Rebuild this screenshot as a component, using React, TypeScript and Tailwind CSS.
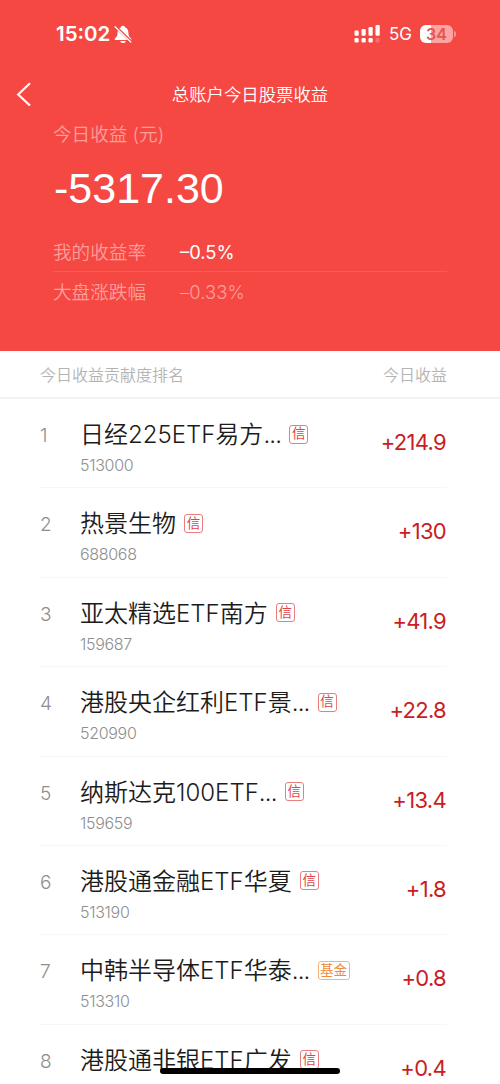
import { clsx } from "clsx";

type Holding = {
  name: string;
  cut?: boolean;
  code?: string;
  tag: "信" | "基金";
  profit: string;
};

const holdings: Holding[] = [
  { name: "日经225ETF易方", cut: true, code: "513000", tag: "信", profit: "+214.9" },
  { name: "热景生物", code: "688068", tag: "信", profit: "+130" },
  { name: "亚太精选ETF南方", code: "159687", tag: "信", profit: "+41.9" },
  { name: "港股央企红利ETF景", cut: true, code: "520990", tag: "信", profit: "+22.8" },
  { name: "纳斯达克100ETF", cut: true, code: "159659", tag: "信", profit: "+13.4" },
  { name: "港股通金融ETF华夏", code: "513190", tag: "信", profit: "+1.8" },
  { name: "中韩半导体ETF华泰", cut: true, code: "513310", tag: "基金", profit: "+0.8" },
  { name: "港股通非银ETF广发", tag: "信", profit: "+0.4" },
];

function BellOff() {
  return (
    <svg className="ml-[4px] h-[19px] w-[18px]" viewBox="0 0 18 19" fill="none">
      <path
        d="M9 .8c-1.300 0-2 .8-2.200 1.700C4.600 3.300 3.600 5.300 3.600 7.800c0 3.200-1.200 4.200-2.700 5.700-.6.7-.3 1.500.6 1.500h15c.9 0 1.200-.8.6-1.500-1.500-1.500-2.700-2.500-2.700-5.700 0-2.500-1-4.500-3.200-5.300C11 1.600 10.300.8 9 .8z"
        fill="#fff"
      />
      <path d="M6.200 15.900h5.600c-.3 1.400-1.400 2.100-2.800 2.100s-2.500-.7-2.800-2.100z" fill="#fff" />
      <path d="M1.200 1.300 17 16.500" stroke="#f64843" strokeWidth="2.800" />
      <path d="M1 1.700 16.800 17" stroke="#fff" strokeWidth="1.200" strokeLinecap="round" />
    </svg>
  );
}

function Signal() {
  return (
    <svg className="h-[18px] w-[26px]" viewBox="0 0 26 18" fill="#fff">
      <rect x="0.500" y="5.500" width="4.200" height="5.200" rx="1.300" />
      <rect x="7.500" y="4" width="4.200" height="6.700" rx="1.300" />
      <rect x="14.500" y="2" width="4.200" height="8.700" rx="1.300" />
      <rect x="21.500" y="0" width="4.200" height="10.700" rx="1.300" />
      <rect x="0.500" y="13" width="4.200" height="4.600" rx="1.300" />
      <rect x="7.500" y="13" width="4.200" height="4.600" rx="1.300" />
      <rect x="14.500" y="13" width="4.200" height="4.600" rx="1.300" />
      <rect x="21.500" y="13" width="4.200" height="4.600" rx="1.300" opacity="0.2" />
    </svg>
  );
}

function Battery() {
  return (
    <div className="flex items-center">
      <div className="flex h-[18px] w-[33px] items-center justify-center rounded-[6px] bg-linear-to-r from-white from-34% to-[#fda4a2] to-34% text-[16px] leading-none font-semibold text-[#e25553]">
        34
      </div>
      <div className="ml-px h-[6px] w-[2px] rounded-r-full bg-[#fb908d]" />
    </div>
  );
}

function StatusBar() {
  return (
    <div className="flex h-[68px] items-center justify-between pr-[44px] pl-[56px] text-white">
      <div className="flex items-center">
        <span className="pt-px text-[20.500px] font-semibold">15:02</span>
        <BellOff />
      </div>
      <div className="flex items-center">
        <Signal />
        <span className="ml-[9px] w-[31px] pt-[2px] text-[17px] tracking-[-0.2px]">5G</span>
        <Battery />
      </div>
    </div>
  );
}

function HoldingRow({ item, rank }: { item: Holding; rank: number }) {
  return (
    <li className="flex h-[89.4px] border-b border-[#f7f7f7]">
      <span className="w-10 pt-[22px] text-[19px] leading-[30px] font-[350] text-[#8e8e8e]">{rank}</span>
      <div className="flex-1 pt-[18px]">
        <div className="flex h-[36px] items-center">
          <span className="text-[24px] leading-[36px] font-[350] whitespace-nowrap text-[#1c1c1c]">
            {item.name}
            {item.cut && <span className="tracking-[-0.8px]">...</span>}
          </span>
          <span
            className={clsx(
              "mb-[2px] ml-[8px] flex h-[19px] items-center justify-center rounded-[3px] border text-[13.500px] leading-none",
              item.tag === "信"
                ? "w-[19px] border-[#ea7d80] text-[#dc4448]"
                : "w-[32px] border-[#f6b27b] text-[#ee8b3c]",
            )}
          >
            {item.tag}
          </span>
        </div>
        {item.code && (
          <p className="text-[16px] leading-[24px] font-[350] tracking-[-0.3px] text-[#8e8e8e]">{item.code}</p>
        )}
      </div>
      <span className="pt-[28px] pr-px text-[22px] leading-[30px] font-[370] tracking-[-0.7px] text-[#c91d23]">
        {item.profit}
      </span>
    </li>
  );
}

export default function App() {
  return (
    <div className="relative h-[1084px] w-[500px] overflow-hidden bg-white font-['Inter','Noto_Sans_CJK_SC',sans-serif]">
      <header className="h-[351px] bg-[#f64843]">
        <StatusBar />
        <div className="grid h-[52px] grid-cols-[60px_1fr_60px] items-center text-white">
          <svg className="ml-[16px] h-6 w-4" viewBox="0 0 16 24" fill="none" stroke="#fff" strokeWidth="2.200">
            <path d="M14 1.200 2.200 12.500l11.800 11" />
          </svg>
          <h1 className="pt-[3px] text-center text-[17.400px] font-[350]">总账户今日股票收益</h1>
        </div>
        <div className="pr-[53px] pl-[53px]">
          <p className="h-[28px] text-[18.600px] leading-[29px] font-[350] text-[#fb9f9b]">
            今日收益 (元)
          </p>
          <p className="h-[84px] pt-[10px] pl-px font-['Liberation_Sans',sans-serif] text-[43px] leading-[60px] text-white">
            -5317.30
          </p>
          <div className="flex h-10 items-center border-b border-[#f95c58] pt-[2px] text-[18.600px]">
            <span className="w-[127px] font-[350] text-[#fb9f9b]">我的收益率</span>
            <span className="text-[18.400px] font-[370] text-white">–0.5%</span>
          </div>
          <div className="flex h-10 items-center pt-[2px] text-[18.600px] font-[350] text-[#fb9f9b]">
            <span className="w-[127px]">大盘涨跌幅</span>
            <span className="text-[18.400px] tracking-[0.1px]">–0.33%</span>
          </div>
        </div>
      </header>

      <div className="flex h-[48px] items-center justify-between border-b-2 border-[#f2f2f2] pt-[2px] pr-[53px] pl-10 text-[16px] font-[350] text-[#b4b4b4]">
        <span>今日收益贡献度排名</span>
        <span>今日收益</span>
      </div>

      <ul className="pr-[53px] pl-10">
        {holdings.map((item, i) => (
          <HoldingRow key={item.name} item={item} rank={i + 1} />
        ))}
      </ul>

      {/* home indicator */}
      <div className="absolute bottom-[10px] left-[160px] h-[6px] w-[180px] rounded-full bg-black" />
    </div>
  );
}
